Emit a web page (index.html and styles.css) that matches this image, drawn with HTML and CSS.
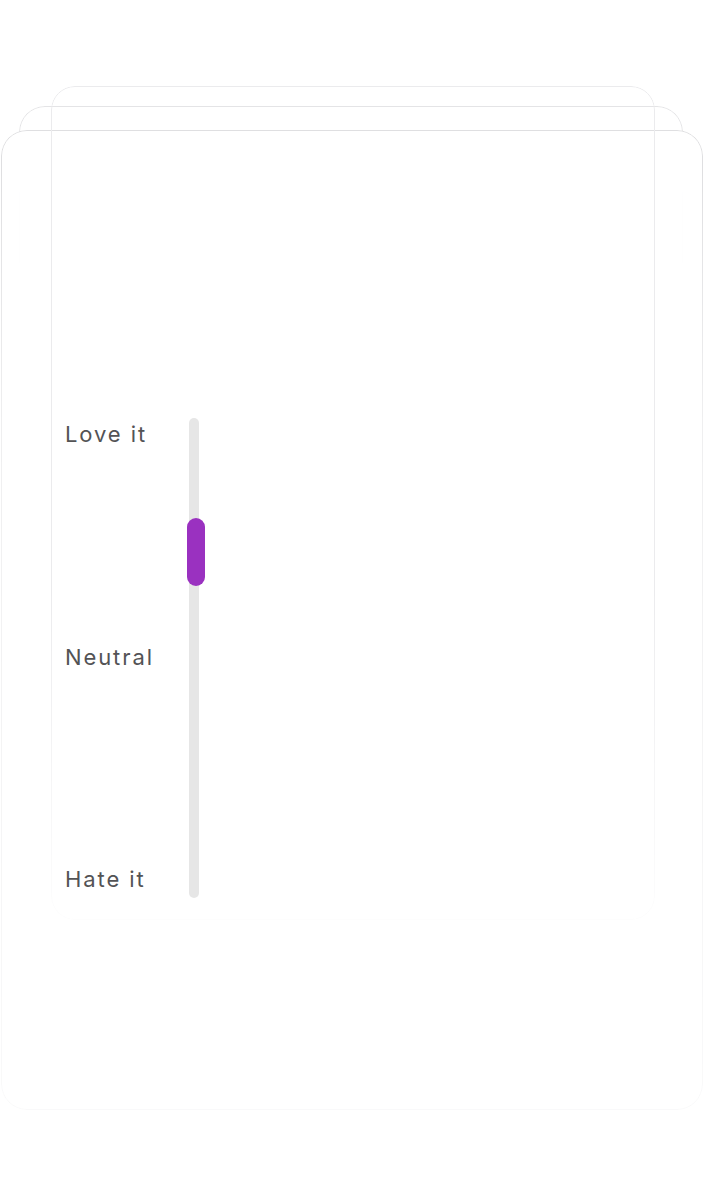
FILE: index.html
```html
<!doctype html>
<html>
<head>
  <meta charset="utf-8">
  <title>Rating</title>
  <link rel="stylesheet" href="styles.css">
</head>
<body>
  <div class="stage">
    <!-- stacked cards behind -->
    <div class="card card-middle"></div>
    <div class="card card-front"></div>

    <div class="card-inner">
      <div class="rating">
        <div class="labels">
          <span>Love it</span>
          <span>Neutral</span>
          <span>Hate it</span>
        </div>
        <div class="track">
          <div class="thumb"></div>
        </div>
      </div>
    </div>
  </div>
</body>
</html>
```

FILE: styles.css
```css
/* ========== Base ========== */
body {
  margin: 0;
  padding: 0;
  background: #fff;
  font-family: Inter, "Liberation Sans", sans-serif;
}

.stage {
  position: relative;
  height: 1182px;
  padding-top: 86px;
  box-sizing: border-box;
  overflow: hidden;
}

/* ========== Stacked cards ========== */
.card {
  position: absolute;
  background: #fff;
  border: 1px solid #e4e4e6;
  border-radius: 26px;
  box-sizing: border-box;
}

.card-middle {
  top: 106px;
  left: 19px;
  width: 664px;
  height: 300px;
  box-shadow: 0 -1px 2px rgba(0, 0, 0, 0.04);
  -webkit-mask-image: linear-gradient(to bottom, #000 0, #000 15%, rgba(0,0,0,0) 60%);
  mask-image: linear-gradient(to bottom, #000 0, #000 15%, rgba(0,0,0,0) 60%);
}

.card-front {
  top: 130px;
  left: 1px;
  width: 702px;
  height: 980px;
  border-color: #dfdfe1;
  box-shadow: 0 -1px 3px rgba(0, 0, 0, 0.05);
  -webkit-mask-image: linear-gradient(to bottom, #000 0, #000 4%, rgba(0,0,0,0.5) 30%, rgba(0,0,0,0.18) 100%);
  mask-image: linear-gradient(to bottom, #000 0, #000 4%, rgba(0,0,0,0.5) 30%, rgba(0,0,0,0.18) 100%);
}

/* ========== Content card ========== */
.card-inner {
  position: relative;
  margin-left: 51px;
  width: 604px;
  height: 834px;
  box-sizing: border-box;
  padding: 332px 0 0 14px;
}

/* faint outline that fades out toward the bottom */
.card-inner::before {
  content: "";
  position: absolute;
  inset: 0;
  border: 1px solid #ebebed;
  border-radius: 24px;
  -webkit-mask-image: linear-gradient(to bottom, #000 0, #000 60%, rgba(0,0,0,0.1) 100%);
  mask-image: linear-gradient(to bottom, #000 0, #000 60%, rgba(0,0,0,0.1) 100%);
  pointer-events: none;
}

.rating {
  display: flex;
  gap: 23px;
  height: 480px;
}

.labels {
  width: 101px;
  display: flex;
  flex-direction: column;
  justify-content: space-between;
  padding: 0 0 3px;
}

.labels span {
  font-size: 22px;
  line-height: 32px;
  color: #535355;
  letter-spacing: 1.9px;
}

.track {
  position: relative;
  width: 10px;
  height: 480px;
  background: #e6e6e6;
  border-radius: 5px;
}

.thumb {
  position: absolute;
  top: 100px;
  left: -2px;
  width: 18px;
  height: 68px;
  background: #9a31c0;
  border-radius: 9px;
}
```
